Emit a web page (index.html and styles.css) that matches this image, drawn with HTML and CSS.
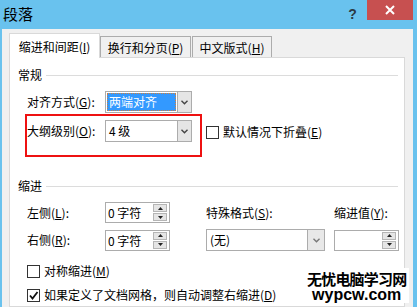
FILE: index.html
```html
<!DOCTYPE html>
<html lang="zh-CN">
<head>
    <meta charset="UTF-8">
    <title>段落</title>
    <link rel="stylesheet" href="styles.css">
</head>
<body>
    <div class="dialog">
        <div class="titlebar">
            <span class="title">段落</span>
            <span class="help">?</span>
            <span class="close">
                <svg width="10" height="10" viewBox="0 0 10 10"><path d="M1 1L9 9M9 1L1 9" stroke="#fff" stroke-width="2"/></svg>
            </span>
        </div>

        <div class="tabs">
            <div class="tab active">缩进和间距(<u>I</u>)</div>
            <div class="tab tab-wrap">换行和分页(<u>P</u>)</div>
            <div class="tab tab-cn">中文版式(<u>H</u>)</div>
        </div>

        <div class="panel">
            <div class="group-title">常规</div>

            <div class="row row-align">
                <label class="label">对齐方式(<u>G</u>):</label>
                <div class="select">
                    <span class="value selected">两端对齐</span>
                    <span class="drop"><svg width="7" height="5" viewBox="0 0 7 5"><path d="M0.5 0.8L3.5 3.8L6.5 0.8" fill="none" stroke="#444" stroke-width="1.4"/></svg></span>
                </div>
            </div>

            <div class="row">
                <div class="highlight">
                    <label class="label">大纲级别(<u>O</u>):</label>
                    <div class="select">
                        <span class="value">4 级</span>
                        <span class="drop"><svg width="7" height="5" viewBox="0 0 7 5"><path d="M0.5 0.8L3.5 3.8L6.5 0.8" fill="none" stroke="#444" stroke-width="1.4"/></svg></span>
                    </div>
                </div>
                <div class="check check-collapse"><span class="box"></span><span>默认情况下折叠(<u>E</u>)</span></div>
            </div>

            <div class="group-title group-indent">缩进</div>

            <div class="indent-grid">
                <label class="label">左侧(<u>L</u>):</label>
                <div class="spin">
                    <span class="value">0 字符</span>
                    <span class="spin-btns">
                        <span><svg width="5" height="3" viewBox="0 0 5 3"><path d="M2.5 0L5 3H0Z" fill="#222"/></svg></span>
                        <span><svg width="5" height="3" viewBox="0 0 5 3"><path d="M0 0H5L2.5 3Z" fill="#222"/></svg></span>
                    </span>
                </div>
                <label class="label">特殊格式(<u>S</u>):</label>
                <label class="label">缩进值(<u>Y</u>):</label>

                <label class="label">右侧(<u>R</u>):</label>
                <div class="spin">
                    <span class="value">0 字符</span>
                    <span class="spin-btns">
                        <span><svg width="5" height="3" viewBox="0 0 5 3"><path d="M2.5 0L5 3H0Z" fill="#222"/></svg></span>
                        <span><svg width="5" height="3" viewBox="0 0 5 3"><path d="M0 0H5L2.5 3Z" fill="#222"/></svg></span>
                    </span>
                </div>
                <div class="select select-wide">
                    <span class="value">(无)</span>
                    <span class="drop"><svg width="7" height="5" viewBox="0 0 7 5"><path d="M0.5 0.8L3.5 3.8L6.5 0.8" fill="none" stroke="#777" stroke-width="1.4"/></svg></span>
                </div>
                <div class="spin">
                    <span class="value"></span>
                    <span class="spin-btns">
                        <span><svg width="5" height="3" viewBox="0 0 5 3"><path d="M2.5 0L5 3H0Z" fill="#222"/></svg></span>
                        <span><svg width="5" height="3" viewBox="0 0 5 3"><path d="M0 0H5L2.5 3Z" fill="#222"/></svg></span>
                    </span>
                </div>
            </div>

            <div class="check check-mirror"><span class="box"></span><span>对称缩进(<u>M</u>)</span></div>
            <div class="check check-grid">
                <span class="box"><svg width="11" height="11" viewBox="0 0 11 11"><path d="M2 5.5L4.5 8.5L9.5 2" fill="none" stroke="#111" stroke-width="1.8"/></svg></span>
                <span>如果定义了文档网格，则自动调整右缩进(<u>D</u>)</span>
            </div>
        </div>

        <div class="watermark">
            <div class="wm-cn">无忧电脑学习网</div>
            <div class="wm-en">wypcw.com</div>
        </div>
    </div>
</body>
</html>
```

FILE: styles.css
```css
body {
    margin: 0;
}
.dialog {
    width: 417px;
    height: 307px;
    box-sizing: border-box;
    border-left: 2px solid #69c2ee;
    border-right: 4px solid #69c2ee;
    background-color: #f0f0f0;
    display: flex;
    flex-direction: column;
    position: relative;
    overflow: hidden;
    font-family: "Noto Sans CJK SC", "Noto Sans", sans-serif;
    font-size: 12px;
    color: #000;
}
.titlebar {
    height: 29px;
    flex-shrink: 0;
    background-color: #69c2ee;
    display: flex;
    align-items: flex-start;
}
.title {
    font-size: 15px;
    line-height: 27px;
    padding-left: 1px;
    margin-right: auto;
}
.help {
    width: 9px;
    margin-right: 10px;
    margin-top: 6px;
    text-align: center;
    font: bold 14px "Liberation Sans", sans-serif;
    color: #2b3a44;
}
.close {
    width: 46px;
    height: 20px;
    background-color: #c75050;
    display: flex;
    align-items: center;
    justify-content: center;
}
.tabs {
    height: 28px;
    flex-shrink: 0;
    display: flex;
    align-items: flex-end;
    padding-left: 7px;
}
.tab {
    height: 21px;
    box-sizing: border-box;
    border: 1px solid #acacac;
    border-bottom: none;
    background-color: #f0f0f0;
    display: flex;
    align-items: center;
    justify-content: center;
}
.tab.active {
    width: 91px;
    height: 25px;
    background-color: #fff;
    border-color: #d9d9d9;
    margin-bottom: -1px;
    position: relative;
    z-index: 1;
}
.tab-wrap {
    width: 91px;
}
.tab-cn {
    width: 80px;
    margin-left: 1px;
}
.panel {
    flex: 1;
    width: 396px;
    margin-left: 7px;
    box-sizing: border-box;
    border: 1px solid #d9d9d9;
    background-color: #fff;
    padding: 0 6px 0 15px;
}
.group-title {
    display: flex;
    align-items: center;
    height: 16px;
    line-height: 16px;
    margin-left: -7px;
    margin-top: 9px;
}
.group-title::after {
    content: "";
    flex: 1;
    border-top: 1px solid #dcdcdc;
    margin-left: 4px;
}
.group-indent {
    margin-top: 21px;
}
.row {
    display: flex;
    align-items: center;
}
.row-align {
    margin-top: 8px;
    padding-left: 2px;
}
.label {
    width: 78px;
    line-height: 16px;
    white-space: nowrap;
}
.select {
    width: 87px;
    height: 22px;
    box-sizing: border-box;
    border: 1px solid #acacac;
    background-color: #fff;
    display: flex;
}
.select .value {
    flex: 1;
    margin: 1px;
    padding-left: 2px;
    line-height: 18px;
    white-space: pre;
}
.select .value.selected {
    background-color: #3399ff;
    color: #fff;
    outline: 1px dotted #d08040;
    outline-offset: -1px;
}
.drop {
    width: 13px;
    background-color: #e5e5e5;
    border-left: 1px solid #acacac;
    display: flex;
    align-items: center;
    justify-content: center;
}
.select-wide {
    width: 119px;
}
.select-wide .drop {
    width: 16px;
    background-color: #e8e8e8;
}
.highlight {
    display: flex;
    align-items: center;
    border: 2px solid #ee1111;
    padding: 4px 8px 13px 0;
    margin-top: 1px;
}
.check {
    display: flex;
    align-items: center;
    gap: 4px;
    line-height: 16px;
    white-space: nowrap;
}
.check .box {
    width: 13px;
    height: 13px;
    box-sizing: border-box;
    border: 1px solid #333;
    background-color: #fff;
    display: flex;
    align-items: center;
    justify-content: center;
}
.check-collapse {
    align-self: flex-start;
    margin-top: 11px;
    margin-left: 4px;
}
.indent-grid {
    display: grid;
    grid-template-columns: 78px 101px 128px 65px;
    grid-template-rows: 21px 22px;
    row-gap: 6px;
    align-items: center;
    margin-top: 8px;
    padding-left: 2px;
}
.spin {
    width: 65px;
    height: 21px;
    box-sizing: border-box;
    border: 1px solid #acacac;
    background-color: #fff;
    display: flex;
}
.spin .value {
    flex: 1;
    padding-left: 2px;
    line-height: 19px;
}
.spin-btns {
    width: 14px;
    margin: 1px 2px 1px 0;
    display: flex;
    flex-direction: column;
    gap: 1px;
}
.spin-btns span {
    flex: 1;
    background-color: #e5e5e5;
    border: 1px solid #b5b5b5;
    display: flex;
    align-items: center;
    justify-content: center;
}
.check-mirror {
    margin-top: 12px;
    padding-left: 2px;
}
.check-grid {
    margin-top: 8px;
    padding-left: 2px;
}
.watermark {
    position: absolute;
    left: 302px;
    top: 268px;
    background-color: #fff;
    padding: 1px 3px 2px;
    text-align: center;
    font-weight: bold;
}
.wm-cn {
    font-size: 15px;
    line-height: 19px;
    letter-spacing: -0.8px;
}
.wm-en {
    font-family: "Liberation Sans", sans-serif;
    font-size: 16px;
    line-height: 13px;
}
```
